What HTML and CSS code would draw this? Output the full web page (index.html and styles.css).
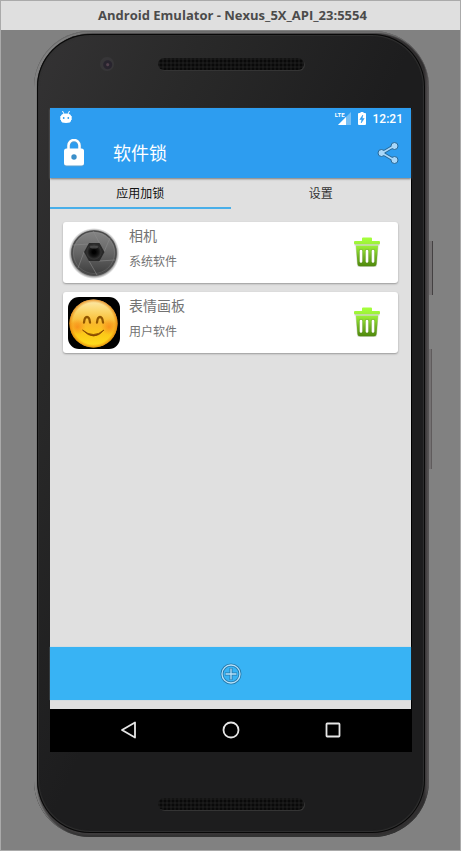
FILE: index.html
```html
<!DOCTYPE html>
<html lang="zh-CN">
<head>
<meta charset="utf-8">
<meta name="viewport" content="width=device-width, initial-scale=1">
<title>Android Emulator - Nexus_5X_API_23:5554</title>
<link rel="stylesheet" href="styles.css">
</head>
<body>
<header class="titlebar">Android Emulator - Nexus_5X_API_23:5554</header>
<main class="stage">
  <div class="phone">
    <span class="side-key power"></span>
    <span class="side-key volume"></span>
    <div class="phone-face">
      <div class="bezel bezel-top">
        <span class="camera"></span>
        <span class="speaker"></span>
      </div>
      <div class="screen">
        <div class="app">
          <div class="blue-head">
            <div class="statusbar">
              <svg width="12" height="14" viewBox="0 0 12 14" aria-hidden="true"><path d="M2.500 0l1.500 3M9.500 0L8 3" stroke="#fff" stroke-width="1"/><path d="M1 5Q1 2.500 6 2.500T11 5v4.500Q11 12 6 12T1 9.500z" fill="#fff"/><path d="M.5 5v4M11.500 5v4" stroke="#fff" opacity=".7"/><circle cx="3.700" cy="7" r=".9" fill="#2d9df0"/><circle cx="8.300" cy="7" r=".9" fill="#2d9df0"/></svg>
              <span class="network"><span class="lte">LTE</span><svg width="13" height="13" viewBox="0 0 13 13" aria-hidden="true"><path d="M13 0v13H0z" fill="#fff" opacity=".35"/><path d="M8 5v8H0z" fill="#fff"/></svg></span>
              <svg class="battery" width="8" height="13" viewBox="0 0 8 13" aria-hidden="true"><path d="M2.500 0h3v1H7q1 0 1 1v10q0 1-1 1H1q-1 0-1-1V2q0-1 1-1h1.500z" fill="#fff"/><path d="M4.800 3L1.800 7.500h2L3.200 11l3-4.500h-2z" fill="#2d9df0" stroke="#2d9df0" stroke-width=".5"/></svg>
              <time class="clock">12:21</time>
            </div>
            <div class="appbar">
              <svg width="22" height="28" viewBox="0 0 22 28" aria-hidden="true"><path d="M5.500 11V7a5.500 5.500 0 0 1 11 0v4" fill="none" stroke="#5b9fce" stroke-width="3.500"/><path d="M5.500 11V6.500a5.500 5.500 0 0 1 11 0V11" fill="none" stroke="#fff" stroke-width="2.500"/><rect x="1" y="10" width="20" height="17.500" rx="2.500" fill="#5b9fce"/><rect x="1" y="9.500" width="20" height="17" rx="2.500" fill="#fff"/><circle cx="11" cy="18" r="2.700" fill="#3b8fc9"/></svg>
              <h1 class="app-title">软件锁</h1>
              <button class="icon-button" aria-label="分享">
                <svg width="22" height="24" viewBox="0 0 22 24"><path d="M17 5L5 12l12 7" fill="none" stroke="#286897" stroke-width="3.400"/><g fill="#a9d8fa" stroke="#286897"><circle cx="17.500" cy="5" r="3.500"/><circle cx="4.500" cy="12" r="3.500"/><circle cx="17.500" cy="19" r="3.500"/></g><path d="M17 5L5 12l12 7" fill="none" stroke="#a9d8fa" stroke-width="1.600"/></svg>
              </button>
            </div>
          </div>
          <nav class="tabs">
            <button class="tab tab-active">应用加锁</button>
            <button class="tab">设置</button>
          </nav>
          <ul class="list">
            <li class="card">
              <svg class="app-icon" width="52" height="52" viewBox="0 0 52 52" aria-hidden="true">
                <defs>
                  <linearGradient id="lens" x1="0" y1="0" x2="0" y2="1"><stop offset="0" stop-color="#858585"/><stop offset=".5" stop-color="#666"/><stop offset="1" stop-color="#3c3c3c"/></linearGradient>
                  <radialGradient id="halo"><stop offset=".84" stop-color="#333" stop-opacity=".9"/><stop offset="1" stop-color="#777" stop-opacity="0"/></radialGradient>
                  <radialGradient id="hole"><stop offset=".2" stop-color="#000"/><stop offset=".65" stop-color="#181818"/><stop offset="1" stop-color="#3a3a3a"/></radialGradient>
                </defs>
                <circle cx="26" cy="26.500" r="25.500" fill="url(#halo)"/>
                <circle cx="26" cy="26" r="22" fill="url(#lens)" stroke="#4c4c4c" stroke-width="1.500"/>
                <circle cx="26" cy="26" r="20.500" fill="none" stroke="#969696" stroke-width=".5" opacity=".5"/>
                <path d="M21 17L5 18M32 17L25 4M36 25L42 11M31 34l16-1M21 34l8 14M16 25L10 41" stroke="#8c8c8c" stroke-width=".8" opacity=".75"/>
                <path d="M21 16h10.500l5 9-5 9H21l-5-9z" fill="#292929"/>
                <circle cx="26" cy="25" r="7.500" fill="url(#hole)"/>
                <ellipse cx="26" cy="20" rx="4" ry="1.500" fill="#646464" opacity=".6"/>
              </svg>
              <div class="card-text"><h2 class="card-title">相机</h2><p class="card-note">系统软件</p></div>
              <button class="icon-button" aria-label="删除相机">
                <svg width="28" height="32" viewBox="0 0 28 32"><defs><linearGradient id="leaf" gradientUnits="userSpaceOnUse" x1="0" y1="1" x2="0" y2="30"><stop offset="0" stop-color="#a5ff3d"/><stop offset=".3" stop-color="#98ec35"/><stop offset=".6" stop-color="#75b925"/><stop offset="1" stop-color="#4d850a"/></linearGradient></defs><g id="bin"><path d="M2.500 8.500h23L24 27.500q-.2 2.500-2.500 2.500h-15Q4.200 30 4 27.500z" fill="#a9b59c" opacity=".6"/><path d="M3 8.500h22l-1.500 18.500q-.2 2.300-2.500 2.300H7q-2.300 0-2.500-2.300z" fill="url(#leaf)"/><path d="M1.500 7.800h25" stroke="#c3cabc" stroke-width="1.200"/><path d="M9 4V1.500q0-1 1-1h8q1 0 1 1V4h7q1 0 1 1v1.300q0 1-1 1H2q-1 0-1-1V5q0-1 1-1z" fill="url(#leaf)"/><path d="M8 14v10.500M14 14v10.500M20 14v10.500" stroke="#4d7f16" stroke-width="3.800" stroke-linecap="round" opacity=".4"/><path d="M8 14v10.500M14 14v10.500M20 14v10.500" stroke="#fff" stroke-width="2.700" stroke-linecap="round"/></g></svg>
              </button>
            </li>
            <li class="card">
              <svg class="app-icon" width="52" height="52" viewBox="0 0 52 52" aria-hidden="true">
                <defs>
                  <linearGradient id="face" x1="0" y1="0" x2="0" y2="1"><stop offset="0" stop-color="#fcebb0"/><stop offset=".25" stop-color="#fbd568"/><stop offset=".5" stop-color="#f9b82b"/><stop offset=".75" stop-color="#fccb18"/><stop offset="1" stop-color="#fee01c"/></linearGradient>
                  <radialGradient id="rim"><stop offset=".86" stop-color="#e98c10" stop-opacity="0"/><stop offset="1" stop-color="#e07b09" stop-opacity=".8"/></radialGradient>
                  <radialGradient id="blush"><stop offset="0" stop-color="#f77716" stop-opacity=".6"/><stop offset="1" stop-color="#f77716" stop-opacity="0"/></radialGradient>
                </defs>
                <rect width="52" height="52" rx="11" fill="#000"/>
                <circle cx="25.500" cy="26.500" r="24" fill="url(#face)"/>
                <circle cx="25.500" cy="26.500" r="24" fill="url(#rim)"/>
                <circle cx="9.500" cy="30" r="8" fill="url(#blush)"/><circle cx="41" cy="30" r="8" fill="url(#blush)"/>
                <path d="M16 25.500Q16.500 20 19 20t3 5.500M29 25.500Q29.500 20 32 20t3 5.500" fill="none" stroke="#905600" stroke-width="2.300" stroke-linecap="round"/>
                <path d="M14.500 33Q25.500 42 36 33 26 45 14.500 33z" fill="#854700" stroke="#854700" stroke-width=".8" stroke-linejoin="round"/>
              </svg>
              <div class="card-text"><h2 class="card-title">表情画板</h2><p class="card-note">用户软件</p></div>
              <button class="icon-button" aria-label="删除表情画板"><svg width="28" height="32" viewBox="0 0 28 32"><use href="#bin"/></svg></button>
            </li>
          </ul>
          <button class="add-bar" aria-label="添加应用">
            <svg width="22" height="22" viewBox="0 0 22 22" fill="none"><circle cx="11" cy="11" r="9" stroke="#267aab" stroke-width="3"/><path d="M11 5v12M5 11h12" stroke="#267aab" stroke-width="3"/><circle cx="11" cy="11" r="9" stroke="#b5e1fa" stroke-width="1.300"/><path d="M11 5.500v11M5.500 11h11" stroke="#b5e1fa" stroke-width="1.300"/></svg>
          </button>
        </div>
        <nav class="navbar">
          <button class="icon-button" aria-label="返回"><svg width="18" height="18" viewBox="0 0 18 18"><path d="M15 1.500v15L2 9z" fill="none" stroke="#e6e6e6" stroke-width="1.800" stroke-linejoin="round"/></svg></button>
          <button class="icon-button" aria-label="主屏幕"><svg width="18" height="18" viewBox="0 0 18 18"><circle cx="9" cy="9" r="7.500" fill="none" stroke="#e6e6e6" stroke-width="1.800"/></svg></button>
          <button class="icon-button" aria-label="最近任务"><svg width="18" height="18" viewBox="0 0 18 18"><rect x="2.500" y="2.500" width="13" height="13" rx=".7" fill="none" stroke="#e6e6e6" stroke-width="1.800"/></svg></button>
        </nav>
      </div>
      <div class="bezel bezel-bottom"><span class="speaker"></span></div>
    </div>
  </div>
</main>
</body>
</html>
```
FILE: styles.css
```css
* {
  box-sizing: border-box;
}

body {
  margin: 0;
  min-height: 100vh;
  display: flex;
  flex-direction: column;
  border: 1px solid #aaa;
  background: #818181;
  font-family: "Noto Sans", "Noto Sans CJK SC", sans-serif;
}

button {
  border: 0;
  padding: 0;
  background: none;
  font: inherit;
  color: inherit;
  cursor: pointer;
}

svg {
  display: block;
}

h1,
h2,
p,
ul {
  margin: 0;
  padding: 0;
  font-weight: 400;
}

.titlebar {
  padding-left: 4px;
  background: #dfdfdf;
  color: #4b4b4b;
  font-family: "Open Sans", sans-serif;
  font-size: 13px;
  font-weight: 700;
  line-height: 29px;
  text-align: center;
}

.stage {
  flex: 1;
  display: flex;
  padding: 1px 31px 13px 33px;
}

/* Device frame */
.phone {
  position: relative;
  flex: 1;
  display: flex;
  padding: 3px 4px 4px 3px;
  border-radius: 56px;
  background: linear-gradient(90deg, #656464, #403e3f 4px, #302e2f calc(100% - 5px), #4b4849 calc(100% - 2px), #5c595a);
  box-shadow: inset 0 1px 1px #696969, inset 3px 2px 2px #858585, inset 0 -2px 1px #343434;
}

.phone-face {
  flex: 1;
  display: flex;
  flex-direction: column;
  padding: 0 13px;
  border-radius: 53px;
  background: linear-gradient(115deg, #343334, #292929 22%, #1d1d1e 50%, #1d1d1e);
  box-shadow: inset 0 0 0 1px #080808, inset 0 0 1px 2px #303030;
}

.side-key {
  position: absolute;
  left: 100%;
  background: #747172;
  border-right: 1px solid #444142;
}

.power {
  top: 26%;
  width: 4px;
  height: 54px;
}

.volume {
  top: 39.500%;
  width: 3px;
  height: 120px;
  border-color: #5f5b5c;
}

.bezel {
  display: grid;
  grid-template-columns: 1fr 146px 1fr;
  align-items: center;
}

.bezel-top {
  height: 74px;
  padding-bottom: 15px;
}

.bezel-bottom {
  height: 81px;
  padding-top: 22px;
}

.camera {
  justify-self: center;
  margin-left: 6px;
  width: 14px;
  height: 14px;
  border-radius: 50%;
  background: radial-gradient(circle at 55% 55%, #53414d 0 1px, #28242e 2px 4px, #373638 5px);
}

.speaker {
  grid-column: 2;
  height: 12px;
  border-radius: 6px;
  background: radial-gradient(circle, #090909 1px, #1a1a1a 2px) 1px 1px / 4px 4px;
  box-shadow: 1px 1px 0 #343434;
}

/* Screen */
.screen {
  flex: 1;
  display: flex;
  flex-direction: column;
  background: #000;
}

.app {
  flex: 1;
  display: flex;
  flex-direction: column;
  margin-right: 1px;
  padding-bottom: 9px;
  background: #e0e0e0;
}

.blue-head {
  background: #2d9df0;
  color: #fff;
  box-shadow: 0 1px 2px #777;
}

.statusbar {
  display: flex;
  align-items: center;
  height: 20px;
  padding: 0 8px 0 10px;
}

.network {
  display: flex;
  align-items: flex-end;
  margin-left: auto;
}

.lte {
  align-self: flex-start;
  margin-right: -7px;
  font: 700 6px/6px "Liberation Sans Narrow", Roboto, sans-serif;
}

.battery {
  margin: 0 7px;
}

.clock {
  padding-top: 2px;
  font: 500 12px/18px Roboto, sans-serif;
}

.appbar {
  display: flex;
  align-items: center;
  height: 50px;
  padding: 0 12px 0 13px;
}

.app-title {
  flex: 1;
  margin-left: 28px;
  font-size: 18px;
  line-height: 24px;
}

.tabs {
  display: grid;
  grid-template-columns: 1fr 1fr;
}

.tab {
  height: 31px;
  padding-top: 2px;
  border-bottom: 2px solid transparent;
  color: #333;
  font-size: 12px;
  line-height: 27px;
}

.tab-active {
  border-color: #49afe9;
  color: #111;
}

.list {
  flex: 1;
  display: flex;
  flex-direction: column;
  gap: 9px;
  padding: 13px;
  list-style: none;
}

.card {
  display: flex;
  align-items: center;
  height: 61px;
  padding: 0 17px 0 5px;
  border-radius: 3px;
  background: #fff;
  box-shadow: 0 1px 2px #999;
}

.card-text {
  flex: 1;
  align-self: flex-start;
  margin-left: 9px;
  color: #737373;
}

.card-title {
  font-size: 14px;
  line-height: 28px;
}

.card-note {
  font-size: 12px;
  line-height: 24px;
}

.add-bar {
  display: flex;
  align-items: center;
  justify-content: center;
  height: 53px;
  background: #38b3f4;
  box-shadow: 0 0 1px #9cc9e0;
}

.navbar {
  display: flex;
  align-items: center;
  justify-content: center;
  gap: 84px;
  height: 43px;
  padding: 0 1px 2px 0;
}
```
